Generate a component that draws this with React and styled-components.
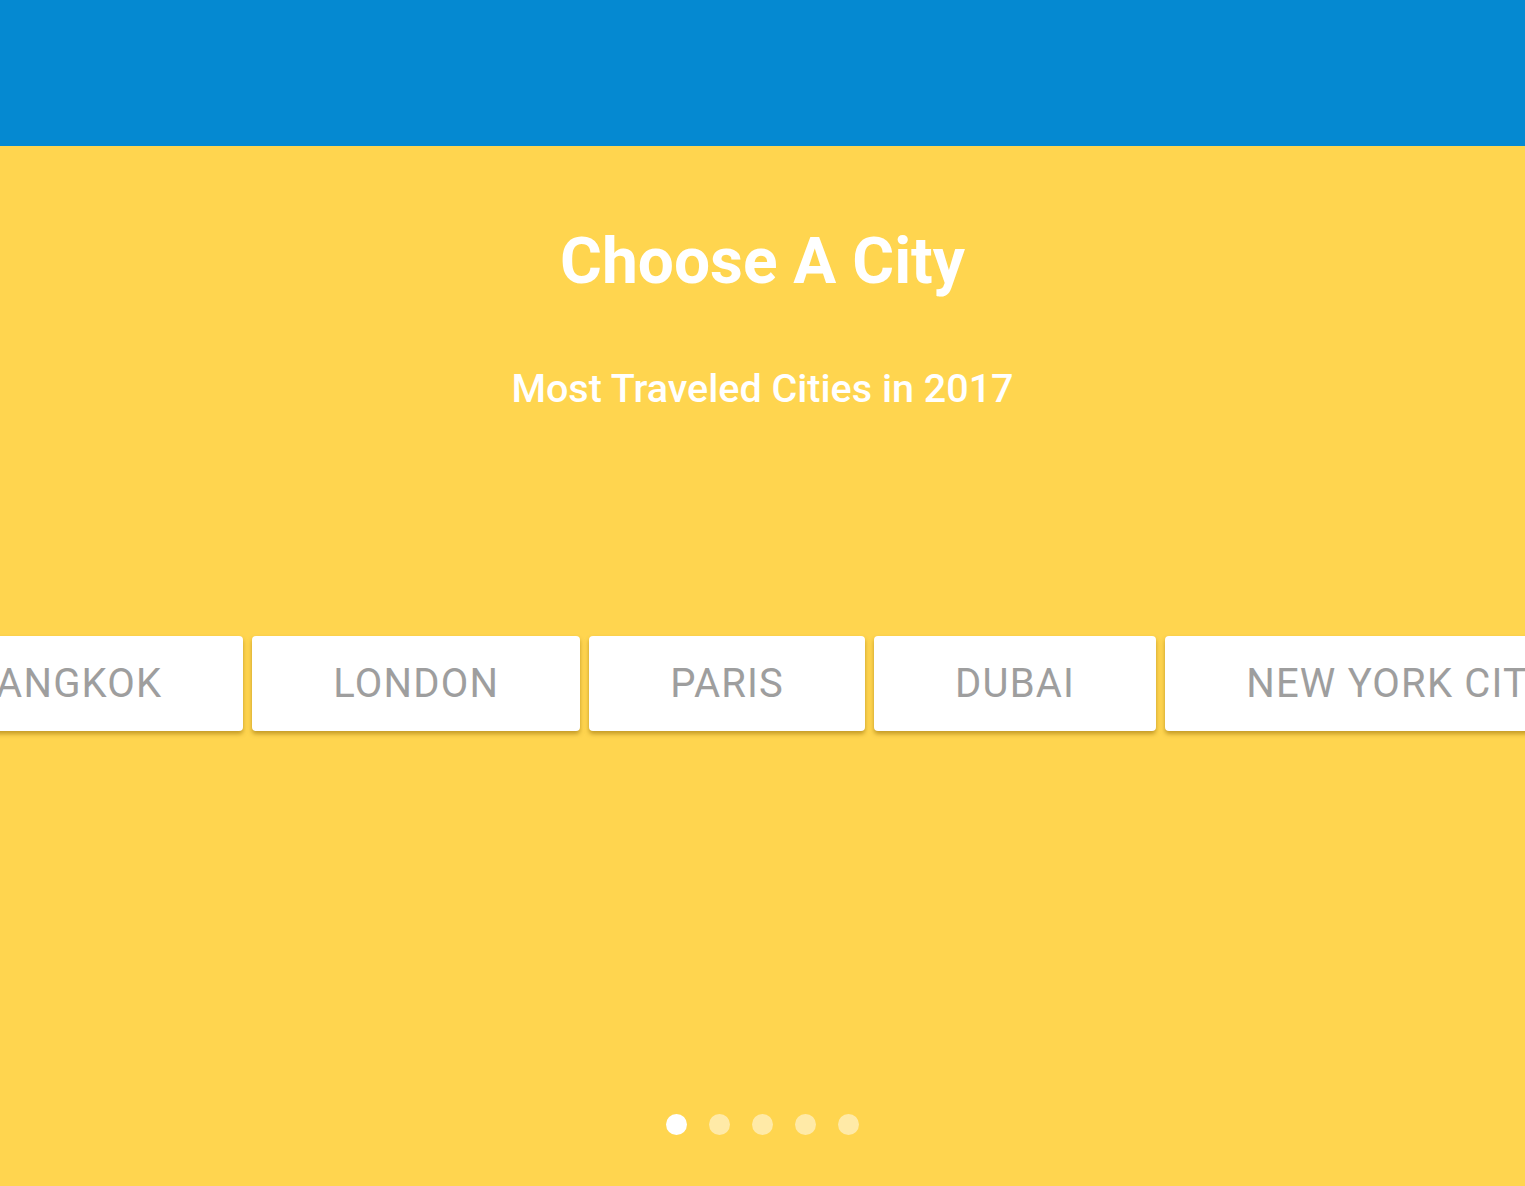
import styled, { createGlobalStyle } from "styled-components";

const cities = ["BANGKOK", "LONDON", "PARIS", "DUBAI", "NEW YORK CITY", "TOKYO"];

export default function App() {
  return (
    <>
      <GlobalStyle />
      <Header />
      <Hero>
        <Title>Choose A City</Title>
        <Subtitle>Most Traveled Cities in 2017</Subtitle>
        <Carousel>
          <Track>
            {cities.map((city) => (
              <CityCard key={city}>{city}</CityCard>
            ))}
          </Track>
        </Carousel>
        <Dots>
          {[0, 1, 2, 3, 4].map((i) => (
            <Dot key={i} active={i === 0} />
          ))}
        </Dots>
      </Hero>
    </>
  );
}

const GlobalStyle = createGlobalStyle`
  body {
    margin: 0;
    font-family: Roboto, "Liberation Sans", sans-serif;
    overflow: hidden;
  }
`;

const Header = styled.header`
  height: 146px;
  background-color: #0589d1;
`;

const Hero = styled.section`
  height: 1040px;
  background-color: #ffd54f;
  display: flex;
  flex-direction: column;
  align-items: center;
  overflow: hidden;
`;

const Title = styled.h1`
  margin: 76px 0 0;
  font-size: 64px;
  line-height: 79px;
  font-weight: 700;
  color: #ffffff;
`;

const Subtitle = styled.h2`
  margin: 64px 0 0;
  font-size: 39.5px;
  line-height: 48px;
  font-weight: 500;
  color: #ffffff;
`;

const Carousel = styled.div`
  width: 100%;
  margin-top: 223px;
`;

const Track = styled.div`
  display: flex;
  gap: 9px;
  transform: translateX(-111px);
  padding-bottom: 8px;
`;

const CityCard = styled.div`
  flex: none;
  height: 95px;
  padding: 0 81px;
  display: flex;
  align-items: center;
  background-color: #ffffff;
  border-radius: 4px;
  box-shadow: 0 3px 4px rgba(140, 100, 0, 0.5);
  font-size: 40px;
  letter-spacing: 1.2px;
  color: #9e9e9e;
  white-space: nowrap;
`;

const Dots = styled.div`
  display: flex;
  gap: 22px;
  margin-top: 375px;
`;

const Dot = styled.span`
  width: 21px;
  height: 21px;
  border-radius: 50%;
  background-color: ${(props) => (props.active ? "#ffffff" : "rgba(255, 255, 255, 0.5)")};
`;
